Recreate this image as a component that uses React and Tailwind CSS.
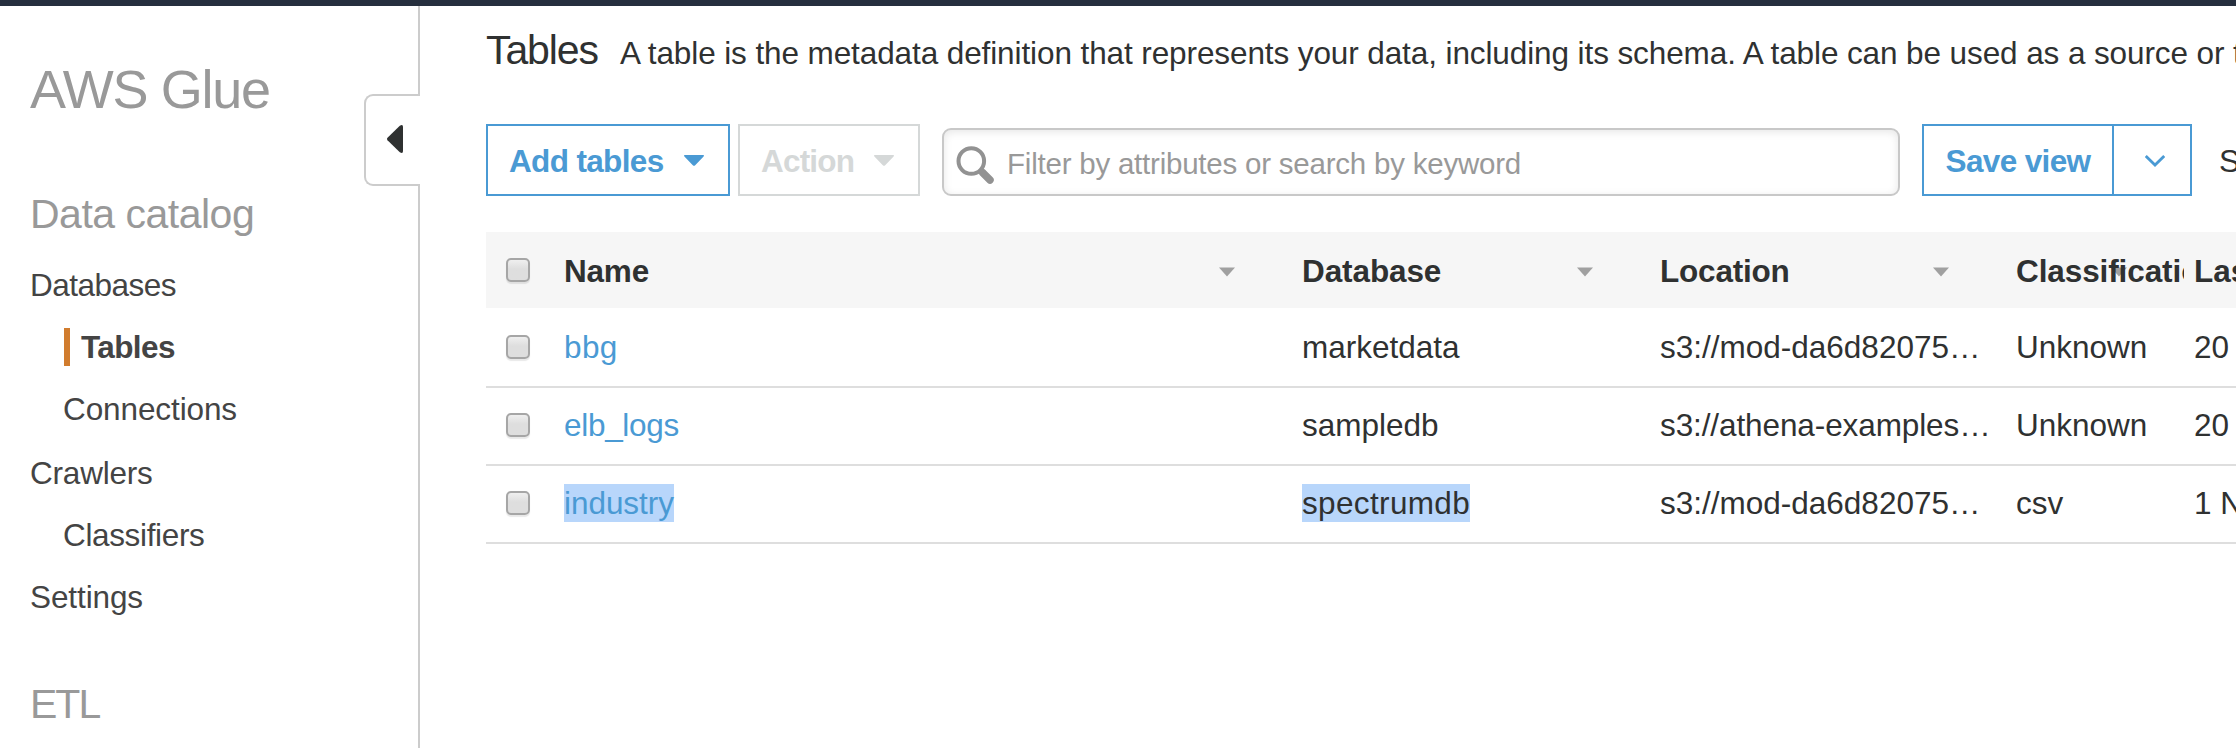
const navItems = [
  { label: 'Databases', className: 'tracking-[-0.5px]' },
  { label: 'Tables', active: true, nested: true, className: 'tracking-[-0.6px]' },
  { label: 'Connections', nested: true, className: 'mb-[2px] tracking-[-0.1px]' },
  { label: 'Crawlers', className: 'tracking-[-0.2px]' },
  { label: 'Classifiers', nested: true, className: 'tracking-[-0.35px]' },
  { label: 'Settings', className: 'tracking-[-0.1px]' },
];

const rows = [
  { name: 'bbg', nameClass: 'tracking-[0.4px]', database: 'marketdata', location: 's3://mod-da6d82075…', classification: 'Unknown', updated: '20' },
  { name: 'elb_logs', nameClass: 'tracking-[-0.3px]', database: 'sampledb', location: 's3://athena-examples…', locationClass: 'tracking-[-0.1px]', classification: 'Unknown', updated: '20' },
  { name: 'industry', nameClass: 'tracking-[-0.05px]', database: 'spectrumdb', location: 's3://mod-da6d82075…', classification: 'csv', updated: '1 N', selected: true },
];

const grid = 'grid grid-cols-[78px_738px_358px_356px_178px_1fr] items-center';

function Caret({ className }) {
  return (
    <svg viewBox="0 0 20 11" className={className} fill="currentColor">
      <path d="M0.6 0H19.4Q20.4 0.6 19.6 1.4L11.2 10.2Q10 11.4 8.8 10.2L0.4 1.4Q-0.4 0.6 0.6 0Z" />
    </svg>
  );
}

function SortCaret() {
  return (
    <svg viewBox="0 0 16 10" className="absolute right-[67px] top-[19px] h-[10px] w-[16px]">
      <path d="M0 0.5H16L8 9.5Z" fill="#a0a0a0" />
    </svg>
  );
}

function Checkbox() {
  return (
    <span className="ml-5 block h-6 w-6 rounded-[5px] border-2 border-[#a6a6a6] bg-linear-to-b from-[#efefef] via-[#dedede] via-45% to-[#dedede] shadow-[0_2px_1px_rgba(0,0,0,0.09)]" />
  );
}

function HeaderCell({ children, caret = true, className = '' }) {
  return (
    <div className={`relative h-[44px] overflow-hidden font-bold leading-[46px] ${className}`}>
      {caret && <SortCaret />}
      <span className="relative">{children}</span>
    </div>
  );
}

function Sidebar() {
  return (
    <aside className="flex w-[420px] shrink-0">
      <div className="w-[364px] shrink-0 pl-[30px]">
        <h1 className="mt-[53px] text-[54px] leading-[60px] tracking-[-1.3px] text-[#999]">AWS Glue</h1>
        <h2 className="mt-[65px] text-[41px] leading-[60px] tracking-[-0.5px] text-[#999]">Data catalog</h2>
        <nav className="mt-[10px] text-[#444]">
          {navItems.map((item) => (
            <div key={item.label} className={`flex h-[62px] items-center ${item.nested ? 'pl-[33px]' : ''} ${item.className}`}>
              {item.active && <span className="mr-[11px] ml-[1px] h-[38px] w-[6px] bg-[#d17c2e]" />}
              <span className={item.active ? 'font-bold' : ''}>{item.label}</span>
            </div>
          ))}
        </nav>
        <h2 className="mt-[46px] text-[41px] leading-[60px] tracking-[-2px] text-[#999]">ETL</h2>
      </div>
      <div className="flex w-[56px] shrink-0 flex-col">
        <div className="h-[88px] border-r-2 border-[#ccc]" />
        <div className="flex h-[92px] shrink-0 items-center rounded-l-[9px] border-y-2 border-l-2 border-[#ccc] pl-[21px]">
          <svg viewBox="0 0 16 28" className="mt-[-2px] h-[28px] w-[16px]" fill="#2f3131">
            <path d="M0.5 12.8L12.8 0.8Q16 -1.2 16 2V26Q16 29.2 12.8 27.2L0.5 15.2Q-0.5 14 0.5 12.8Z" />
          </svg>
        </div>
        <div className="flex-1 border-r-2 border-[#ccc]" />
      </div>
    </aside>
  );
}

function Toolbar() {
  return (
    <div className="mt-[40px] flex h-[72px] items-end whitespace-nowrap">
      <button className="flex h-[72px] w-[244px] shrink-0 items-center justify-between border-2 border-[#4a9ad4] pr-[24px] pl-[21px] font-bold tracking-[-0.65px] text-[#4a9ad4]">
        <span className="pt-[2px]">Add tables</span>
        <Caret className="h-[11px] w-[20px]" />
      </button>
      <button className="ml-2 flex h-[72px] w-[182px] shrink-0 items-center justify-between border-2 border-[#d5d8d8] pr-[24px] pl-[21px] font-bold tracking-[-0.8px] text-[#d5d8d8]">
        <span className="pt-[2px]">Action</span>
        <Caret className="h-[11px] w-[20px]" />
      </button>
      <div className="ml-[22px] flex h-[68px] w-[958px] shrink-0 items-center rounded-[9px] border-2 border-[#c8c8c8] pl-[12px] text-[29.5px] tracking-[-0.22px] text-[#999] shadow-[inset_0_2px_8px_rgba(0,0,0,0.1)]">
        <svg viewBox="0 0 38 38" className="mt-[6px] h-[38px] w-[38px]" fill="none" stroke="#929292">
          <circle cx="15.3" cy="15" r="12.8" strokeWidth="4" />
          <path d="M24.5 24L28 27" strokeWidth="5" />
          <path d="M26.5 26.5L34 34" strokeWidth="7.5" strokeLinecap="round" />
        </svg>
        <span className="ml-[13px] pt-[4px]">Filter by attributes or search by keyword</span>
      </div>
      <div className="ml-[22px] flex h-[72px] w-[270px] shrink-0 border-2 border-[#4a9ad4] text-[#4a9ad4]">
        <button className="w-[190px] border-r-2 border-[#4a9ad4] pt-[2px] font-bold tracking-[-0.65px]">Save view</button>
        <button className="flex flex-1 items-center justify-center pl-[6px]">
          <svg viewBox="0 0 20 12" className="mt-[2px] h-[12px] w-[20px]" fill="none" stroke="currentColor" strokeWidth="2.8">
            <path d="M0.8 1L10 10L19.2 1" />
          </svg>
        </button>
      </div>
      <span className="ml-[27px] flex h-[72px] items-center pt-[2px]">S</span>
    </div>
  );
}

function Table() {
  return (
    <div className="mt-[36px] whitespace-nowrap">
      <div className={`${grid} h-[76px] bg-[#f6f6f6]`}>
        <Checkbox />
        <HeaderCell className="tracking-[-0.2px]">Name</HeaderCell>
        <HeaderCell className="tracking-[-0.1px]">Database</HeaderCell>
        <HeaderCell className="tracking-[-0.2px]">Location</HeaderCell>
        <HeaderCell className="mr-[10px] tracking-[-0.1px] [&>svg]:right-[57px]">Classification</HeaderCell>
        <HeaderCell caret={false}>Las</HeaderCell>
      </div>
      <div className="border-b-2 border-[#dedede]">
        {rows.map((row, i) => (
          <div key={row.name} className={`${grid} h-[78px] ${i > 0 ? 'border-t-2 border-[#dedede] pb-[2px]' : ''}`}>
            <Checkbox />
            <div className={`text-[#4a9ad4] ${row.nameClass}`}>
              <span className={`inline-block h-[38px] leading-[38px] ${row.selected ? 'bg-[#b8d6fb]' : ''}`}>{row.name}</span>
            </div>
            <div>
              <span className={`inline-block h-[38px] leading-[38px] ${row.selected ? 'bg-[#b8d6fb] tracking-[0.35px]' : ''}`}>{row.database}</span>
            </div>
            <div className={row.locationClass}>{row.location}</div>
            <div>{row.classification}</div>
            <div>{row.updated}</div>
          </div>
        ))}
      </div>
    </div>
  );
}

export default function App() {
  return (
    <div className="flex h-[748px] w-[2236px] flex-col overflow-hidden bg-white font-['Liberation_Sans',Arial,sans-serif] text-[31.5px] leading-[38px] text-[#2f3131]">
      <div className="h-[6px] shrink-0 bg-[#262f3e]" />
      <div className="flex min-h-0 flex-1">
        <Sidebar />
        <main className="min-w-0 flex-1 overflow-hidden pl-[66px]">
          <header className="mt-[18px] flex h-[60px] items-baseline whitespace-nowrap">
            <h1 className="text-[41px] leading-[52px] tracking-[-1.1px]">Tables</h1>
            <p className="ml-[22px] tracking-[-0.1px]">
              A table is the metadata definition that represents your data, including its schema. A table can be used as a source or t
            </p>
          </header>
          <Toolbar />
          <Table />
        </main>
      </div>
    </div>
  );
}
